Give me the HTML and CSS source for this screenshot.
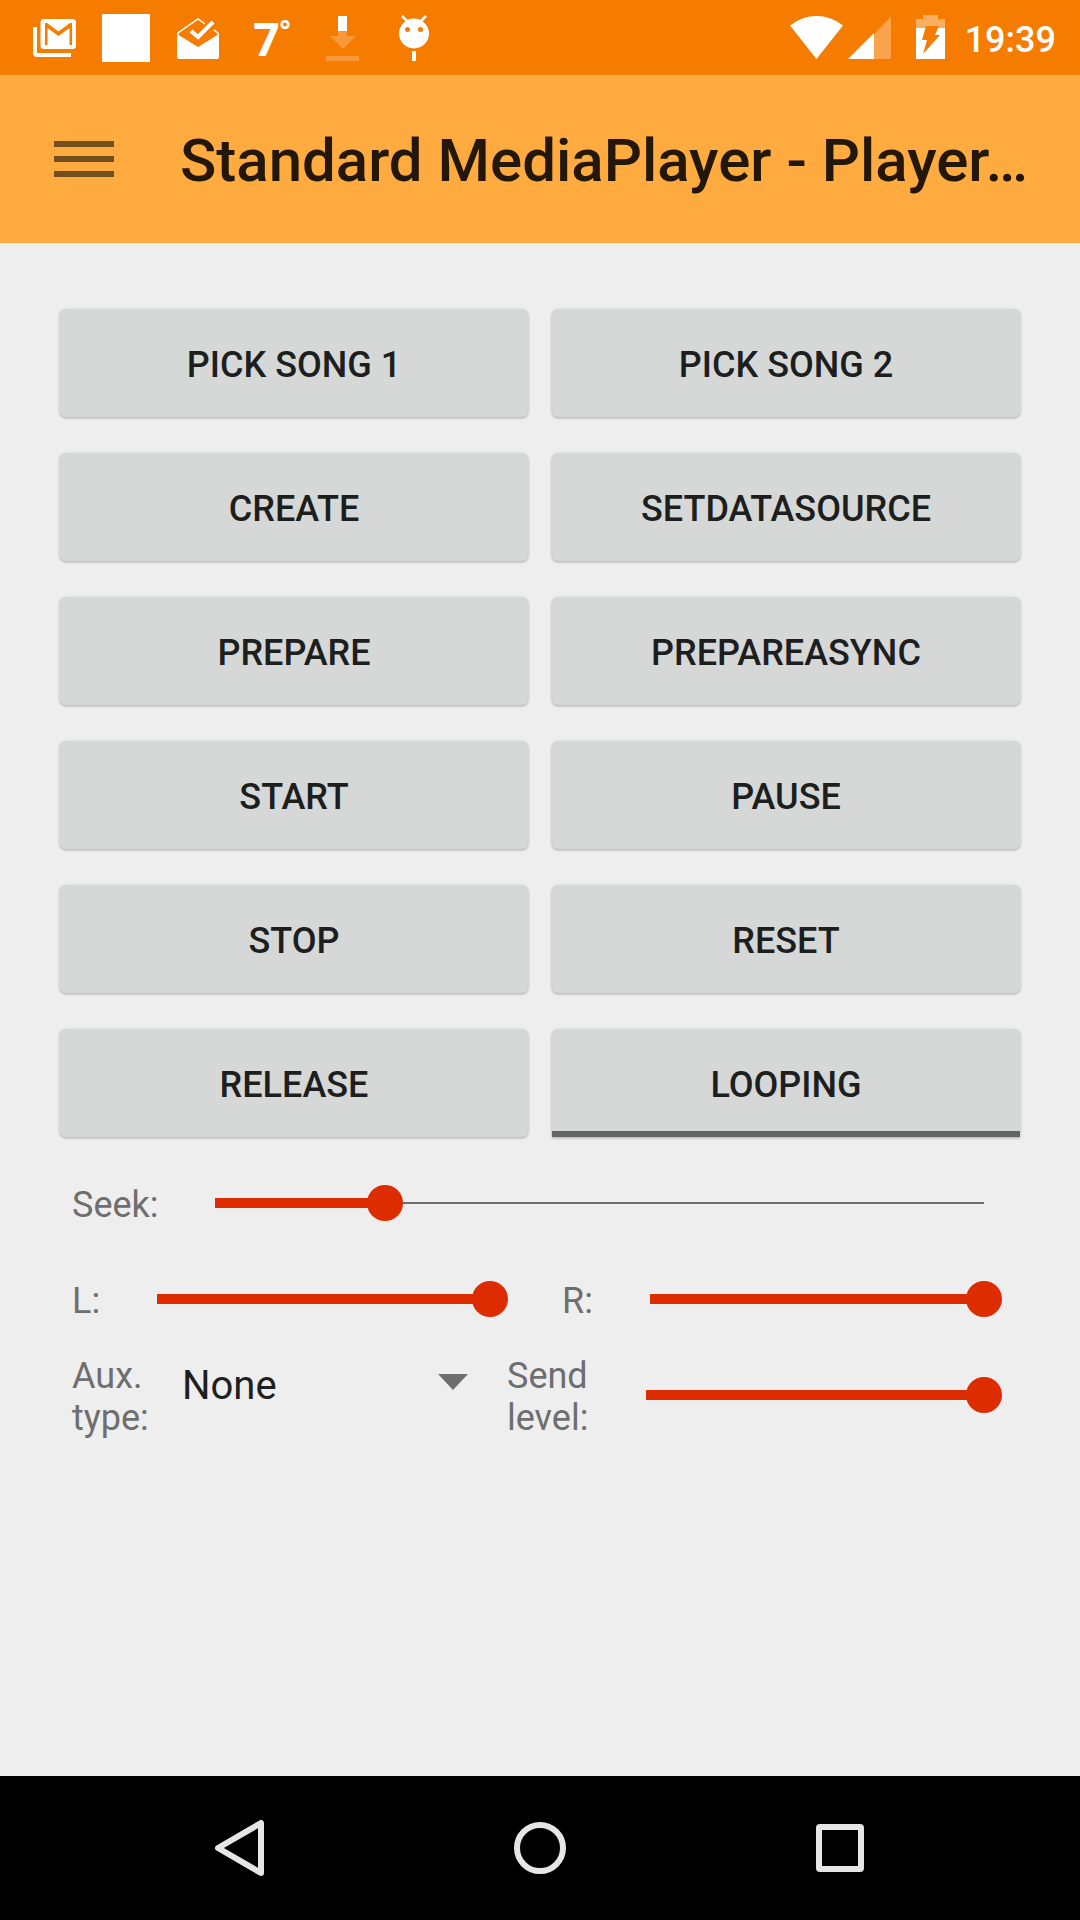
FILE: index.html
```html
<!DOCTYPE html>
<html lang="en">
<head>
<meta charset="utf-8">
<meta name="viewport" content="width=device-width, initial-scale=1">
<title>Standard MediaPlayer</title>
<link rel="stylesheet" href="styles.css">
</head>
<body>
<div class="status-bar">
  <div class="status-group">
    <svg class="notice" viewBox="0 0 72 75" aria-hidden="true">
      <path fill="#fff" d="M15 27h4v26h34v4H19q-4 0-4-4z"/>
      <path fill="#fff" fill-rule="evenodd" d="M25.500 19h29q3.500 0 3.500 3.500v23.500q0 3-3.500 3H26q-3.500 0-3.500-3V22.500q0-3.500 3-3.500zM27 23v22h2.500V28L40.500 36 51.500 28v17H54V23h-2L40.500 31.500 29 23z"/>
    </svg>
    <svg class="notice" viewBox="0 0 72 75" aria-hidden="true">
      <rect x="12" y="14" width="48" height="48" rx="1" fill="#fff"/>
    </svg>
    <svg class="notice" viewBox="0 0 72 75" aria-hidden="true">
      <path fill="#fff" d="M15 34l21 13 21-13v23q0 2-2 2H17q-2 0-2-2z"/>
      <path fill="none" stroke="#fff" stroke-width="1.500" d="M16 36v-3l20-14 7 5M52 30l4 3v3"/>
      <path fill="none" stroke="#fff" stroke-width="4" d="M29 31l7 6L51 22"/>
    </svg>
    <span class="temperature">7<span class="degree">°</span></span>
    <svg class="notice" viewBox="0 0 72 75" aria-hidden="true">
      <path fill="#fff" d="M32 16h9v15h-9z"/>
      <path fill="#fff" opacity=".22" d="M32 31h9v5h9L37 49 24 36h8zM20 56h33v5H20z"/>
    </svg>
    <svg class="notice" viewBox="0 0 72 75" aria-hidden="true">
      <path stroke="#fff" stroke-width="2.500" d="M24 16l6 6M48 16l-6 6"/>
      <path fill="#fff" fill-rule="evenodd" d="M21 33.500a15 15 0 1 1 30 0a15 15 0 1 1-30 0zM27 29.500a2.500 2.500 0 1 0 5 0a2.500 2.500 0 1 0-5 0zM40 29.500a2.500 2.500 0 1 0 5 0a2.500 2.500 0 1 0-5 0z"/>
      <path fill="#fff" d="M34 51h4v10h-4z"/>
    </svg>
  </div>
  <div class="status-group">
    <svg class="signals" viewBox="0 0 156 75" aria-hidden="true">
      <path fill="#fff" d="M0 25.500Q12 16 26.500 16T53 25.500L26.500 59z"/>
      <path fill="#fff" opacity=".3" d="M84 34l17-17.500V59H84z"/>
      <path fill="#fff" d="M58 59l26-26v26z"/>
      <path fill="#fff" opacity=".38" d="M126 19h7v-4h15v4h7v9h-29z"/>
      <path fill="#fff" d="M126 28h29v31h-29z"/>
      <path fill="#f67c00" d="M136 26h13l-4 9h5l-17 19 4-14h-5z"/>
    </svg>
    <time class="clock">19:39</time>
  </div>
</div>

<header class="app-bar">
  <button class="menu-button" type="button" aria-label="Open menu">
    <svg class="menu-icon" viewBox="0 0 60 36" aria-hidden="true"><path fill="#744e1d" d="M0 0h60v6H0zM0 15h60v6H0zM0 30h60v6H0z"/></svg>
  </button>
  <h1 class="title">Standard MediaPlayer - Player…</h1>
</header>

<main class="content">
  <div class="actions">
    <button class="action" type="button">PICK SONG 1</button>
    <button class="action" type="button">PICK SONG 2</button>
    <button class="action" type="button">CREATE</button>
    <button class="action" type="button">SETDATASOURCE</button>
    <button class="action" type="button">PREPARE</button>
    <button class="action" type="button">PREPAREASYNC</button>
    <button class="action" type="button">START</button>
    <button class="action" type="button">PAUSE</button>
    <button class="action" type="button">STOP</button>
    <button class="action" type="button">RESET</button>
    <button class="action" type="button">RELEASE</button>
    <button class="action toggle" type="button" aria-pressed="false">LOOPING</button>
  </div>

  <div class="controls">
    <div class="row seek-row">
      <label class="label" for="seek">Seek:</label>
      <input class="slider" id="seek" type="range" min="0" max="1000" value="221" style="--level: 0.221">
    </div>
    <div class="row volume-row">
      <label class="label" for="left">L:</label>
      <input class="slider" id="left" type="range" min="0" max="100" value="100" style="--level: 1">
      <label class="label label-right" for="right">R:</label>
      <input class="slider" id="right" type="range" min="0" max="100" value="100" style="--level: 1">
    </div>
    <div class="row aux-row">
      <label class="label" for="aux">Aux. type:</label>
      <div class="spinner">
        <select class="spinner-select" id="aux"><option>None</option></select>
        <svg class="spinner-arrow" viewBox="0 0 30 16" aria-hidden="true"><path fill="#6e6e6e" d="M0 0h30L15 16z"/></svg>
      </div>
      <label class="label" for="send">Send level:</label>
      <input class="slider" id="send" type="range" min="0" max="100" value="100" style="--level: 1">
    </div>
  </div>
</main>

<nav class="nav-bar">
  <button class="nav-button" type="button" aria-label="Back">
    <svg class="nav-icon" viewBox="0 0 60 60"><path fill="none" stroke="#e6e6e6" stroke-width="6" stroke-linejoin="round" d="M51 5v50L8 30z"/></svg>
  </button>
  <button class="nav-button" type="button" aria-label="Home">
    <svg class="nav-icon" viewBox="0 0 60 60"><circle cx="30" cy="30" r="23" fill="none" stroke="#e6e6e6" stroke-width="6"/></svg>
  </button>
  <button class="nav-button" type="button" aria-label="Recent apps">
    <svg class="nav-icon" viewBox="0 0 60 60"><rect x="9" y="9" width="42" height="42" rx="1" fill="none" stroke="#e6e6e6" stroke-width="6" stroke-linejoin="round"/></svg>
  </button>
</nav>
</body>
</html>
```
FILE: styles.css
```css
* {
  box-sizing: border-box;
}

body {
  margin: 0;
  min-height: 100vh;
  display: flex;
  flex-direction: column;
  background: #eee;
  font-family: Roboto, sans-serif;
}

button {
  border: 0;
  padding: 0;
  background: none;
  font: inherit;
  color: inherit;
}

svg {
  display: block;
}

/* Status bar */
.status-bar {
  display: flex;
  justify-content: space-between;
  height: 75px;
  padding: 0 24px 0 18px;
  background: #f67c00;
  color: #fff;
}

.status-group {
  display: flex;
  align-items: center;
}

.notice {
  width: 72px;
  height: 75px;
}

.temperature {
  display: flex;
  align-items: flex-start;
  justify-content: center;
  width: 72px;
  padding-left: 4px;
  font: bold 46px/54px "Open Sans", sans-serif;
}

.degree {
  font-size: 26px;
  line-height: 36px;
}

.signals {
  width: 156px;
  height: 75px;
}

.clock {
  padding: 4px 0 0 19px;
  font-size: 36px;
  font-weight: 500;
  line-height: 42px;
}

/* App bar */
.app-bar {
  display: flex;
  align-items: center;
  height: 168px;
  padding: 0 48px;
  background: #ffab40;
}

.menu-button {
  flex: none;
  width: 132px;
  padding-left: 6px;
}

.menu-icon {
  width: 60px;
  height: 36px;
}

.title {
  margin: 0;
  padding-top: 4px;
  font-size: 60px;
  font-weight: 500;
  line-height: 70px;
  color: #231709;
  white-space: nowrap;
}

/* Player */
.content {
  flex: 1;
  padding: 66px 60px;
}

.actions {
  display: grid;
  grid-template-columns: 1fr 1fr;
  gap: 36px 24px;
}

.action {
  height: 108px;
  padding-top: 4px;
  border-radius: 6px;
  background: #d6d8d7;
  box-shadow: 0 1px 3px rgba(0, 0, 0, 0.3);
  color: #1d1e1e;
  font-size: 36px;
  font-weight: 500;
  line-height: 42px;
}

.toggle {
  border-radius: 6px 6px 0 0;
  box-shadow: inset 0 -6px #646664, 0 1px 3px rgba(0, 0, 0, 0.3);
}

.controls {
  padding: 18px 18px 0 12px;
}

.row {
  display: grid;
  align-items: center;
  height: 96px;
}

.seek-row {
  grid-template-columns: 125px 1fr;
}

.volume-row {
  grid-template-columns: 67px 369fr 124px 370fr;
}

.aux-row {
  grid-template-columns: 110px 325fr 121px 374fr;
}

.label {
  padding-top: 4px;
  color: #6e6e6e;
  font-size: 36px;
  line-height: 42px;
}

.label-right {
  padding-left: 54px;
}

.slider {
  appearance: none;
  width: 100%;
  height: 36px;
  margin: 0;
  background:
    linear-gradient(#dd2c00, #dd2c00) 18px center / calc((100% - 36px) * var(--level)) 10px no-repeat,
    linear-gradient(#6e6e6e, #6e6e6e) 18px center / calc(100% - 36px) 2px no-repeat;
}

.slider::-webkit-slider-thumb {
  appearance: none;
  width: 36px;
  height: 36px;
  border-radius: 50%;
  background: #dd2c00;
}

.spinner {
  display: grid;
  grid-template-columns: 1fr 30px;
  align-items: center;
  align-self: start;
  height: 70px;
  padding-right: 39px;
}

.spinner-select {
  appearance: none;
  grid-area: 1 / 1 / 2 / 3;
  padding: 8px 0 0;
  border: 0;
  background: none;
  color: #1f1f1f;
  font: 40px/48px Roboto, sans-serif;
}

.spinner-arrow {
  grid-area: 1 / 2;
  width: 30px;
  height: 16px;
  pointer-events: none;
}

/* System navigation */
.nav-bar {
  display: flex;
  justify-content: center;
  height: 144px;
  background: #000;
}

.nav-button {
  display: flex;
  align-items: center;
  justify-content: center;
  flex: 0 1 300px;
}

.nav-icon {
  width: 60px;
  height: 60px;
}
```
